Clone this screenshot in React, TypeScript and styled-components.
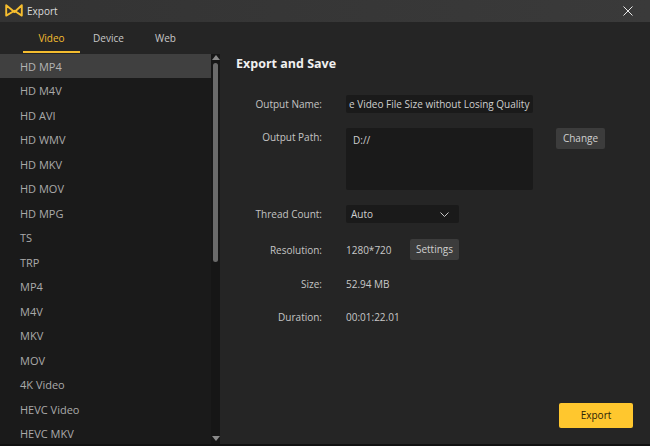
import React from 'react'
import styled, { createGlobalStyle } from 'styled-components'

const formats = [
  'HD MP4', 'HD M4V', 'HD AVI', 'HD WMV', 'HD MKV', 'HD MOV', 'HD MPG', 'TS', 'TRP',
  'MP4', 'M4V', 'MKV', 'MOV', '4K Video', 'HEVC Video', 'HEVC MKV',
]

const App = () => {
  return (
    <Window>
      <GlobalStyle />
      <TitleBar>
        <Logo viewBox="0 0 18 13">
          <path d="M1.2 1.2 L9.5 8 L16.8 1.2 V11.6 L9.5 6.8 L1.2 11.6 Z" fill="none" stroke="#f5bd2f" strokeWidth="1.9" strokeLinejoin="round" />
        </Logo>
        <WindowTitle>Export</WindowTitle>
        <CloseIcon viewBox="0 0 10 10">
          <path d="M0.5 0.5 L9.5 9.5 M9.5 0.5 L0.5 9.5" stroke="#e8e8e8" strokeWidth="1" fill="none" />
        </CloseIcon>
      </TitleBar>
      <Body>
        <Sidebar>
          <Tabs>
            <Tab $active>Video</Tab>
            <Tab>Device</Tab>
            <Tab>Web</Tab>
          </Tabs>
          <ListArea>
            <List>
              {formats.map((name, i) => (
                <ListItem key={name} $selected={i === 0}>{name}</ListItem>
              ))}
            </List>
            <ScrollBar>
              <Arrow viewBox="0 0 8 5"><path d="M4 0 L8 5 H0 Z" fill="#8a8a8a" /></Arrow>
              <Thumb />
              <Arrow viewBox="0 0 8 5"><path d="M0 0 H8 L4 5 Z" fill="#8a8a8a" /></Arrow>
            </ScrollBar>
          </ListArea>
        </Sidebar>
        <Panel>
          <Heading>Export and Save</Heading>
          <Form>
            <Row $height={18}>
              <Label>Output Name:</Label>
              <NameField>e Video File Size without Losing Quality</NameField>
            </Row>
            <Row $height={62} $alignTop>
              <Label>Output Path:</Label>
              <PathField>D://</PathField>
              <GreyButton $left={23}>Change</GreyButton>
            </Row>
            <Row $height={18}>
              <Label>Thread Count:</Label>
              <Select>
                Auto
                <Chevron viewBox="0 0 9 5">
                  <path d="M0.5 0.5 L4.5 4.5 L8.5 0.5" stroke="#c8c8c8" strokeWidth="1" fill="none" />
                </Chevron>
              </Select>
            </Row>
            <ResolutionRow $height={21}>
              <Label>Resolution:</Label>
              <Value $width={64}>1280*720</Value>
              <GreyButton>Settings</GreyButton>
            </ResolutionRow>
            <Row $height={18}>
              <Label>Size:</Label>
              <Value>52.94 MB</Value>
            </Row>
            <Row $height={18}>
              <Label>Duration:</Label>
              <Value>00:01:22.01</Value>
            </Row>
          </Form>
          <Footer>
            <ExportButton>Export</ExportButton>
          </Footer>
        </Panel>
      </Body>
    </Window>
  )
}

export default App

const GlobalStyle = createGlobalStyle`
  html, body {
    margin: 0;
    padding: 0;
    background: #111;
  }
  * {
    box-sizing: border-box;
  }
`
const Window = styled.div`
  width: 650px;
  height: 446px;
  display: flex;
  flex-direction: column;
  overflow: hidden;
  background: #111;
  font-family: "Open Sans", "Noto Sans", sans-serif;
  font-size: 10px;
  color: #c8c8c8;
`
const TitleBar = styled.div`
  height: 22px;
  flex: none;
  display: flex;
  align-items: center;
  padding: 0 17px 1px 5px;
  background: linear-gradient(90deg, #333 0%, #3a3a3a 100%);
`
const Logo = styled.svg`
  width: 18px;
  height: 13px;
`
const WindowTitle = styled.span`
  margin-left: 4px;
  color: #dcdcdc;
  flex: 1;
`
const CloseIcon = styled.svg`
  width: 10px;
  height: 10px;
`
const Body = styled.div`
  flex: none;
  height: 422px;
  display: flex;
`
const Sidebar = styled.div`
  width: 220px;
  flex: none;
  display: flex;
  flex-direction: column;
  background: #252525;
`
const Tabs = styled.div`
  height: 32px;
  flex: none;
  display: flex;
  padding-left: 23px;
`
const Tab = styled.div<{ $active?: boolean }>`
  width: 57px;
  height: 31px;
  line-height: 32px;
  text-align: center;
  color: ${p => (p.$active ? '#f5bd2f' : '#c8c8c8')};
  border-bottom: 2px solid ${p => (p.$active ? '#f5bd2f' : 'transparent')};
`
const ListArea = styled.div`
  flex: 1;
  min-height: 0;
  display: flex;
  background: #1a1a1a;
  overflow: hidden;
`
const List = styled.div`
  flex: 1;
  min-width: 0;
`
const ListItem = styled.div<{ $selected?: boolean }>`
  height: 24.47px;
  line-height: 25px;
  padding-left: 20px;
  font-size: 11px;
  color: ${p => (p.$selected ? '#b4b4b4' : '#aaa')};
  background: ${p => (p.$selected ? '#404040' : 'transparent')};
`
const ScrollBar = styled.div`
  width: 9px;
  flex: none;
  display: flex;
  flex-direction: column;
  align-items: center;
  padding: 1px 0 3px;
  background: #161616;
`
const Arrow = styled.svg`
  width: 8px;
  height: 5px;
  flex: none;
`
const Thumb = styled.div`
  width: 5px;
  height: 199px;
  margin: 3px 0 auto;
  border-radius: 3px;
  background: #6a6a6a;
`
const Panel = styled.div`
  flex: 1;
  display: flex;
  flex-direction: column;
  padding: 0 17px 16px 16px;
  background: #252525;
`
const Heading = styled.h2`
  margin: 32px 0 0;
  height: 20px;
  line-height: 20px;
  font-size: 12.5px;
  font-weight: 700;
  color: #f0f0f0;
`
const Form = styled.div`
  display: flex;
  flex-direction: column;
  gap: 15px;
  margin-top: 21px;
`
const Row = styled.div<{ $height: number; $alignTop?: boolean }>`
  height: ${p => p.$height}px;
  display: flex;
  align-items: ${p => (p.$alignTop ? 'flex-start' : 'center')};
`
const ResolutionRow = styled(Row)`
  margin-top: 1px;
`
const Label = styled.div`
  width: 86px;
  margin-right: 24px;
  flex: none;
  line-height: 18px;
  text-align: right;
  color: #c4c4c4;
`
const NameField = styled.div`
  width: 187px;
  height: 18px;
  padding-left: 3px;
  line-height: 18px;
  white-space: nowrap;
  overflow: hidden;
  border-radius: 2px;
  background: #1a1a1a;
  color: #cfcfcf;
`
const PathField = styled.div`
  width: 187px;
  height: 62px;
  padding: 3px 7px;
  line-height: 18px;
  border-radius: 2px;
  background: #1a1a1a;
  color: #cfcfcf;
`
const GreyButton = styled.div<{ $left?: number }>`
  width: 49px;
  height: 21px;
  margin-left: ${p => p.$left ?? 0}px;
  line-height: 21px;
  text-align: center;
  border-radius: 2px;
  background: #3c3c3c;
  color: #d0d0d0;
`
const Select = styled.div`
  width: 113px;
  height: 18px;
  padding: 0 10px 0 5px;
  display: flex;
  align-items: center;
  justify-content: space-between;
  border-radius: 2px;
  background: #1a1a1a;
  color: #cfcfcf;
`
const Chevron = styled.svg`
  width: 9px;
  height: 5px;
`
const Value = styled.div<{ $width?: number }>`
  width: ${p => (p.$width ? `${p.$width}px` : 'auto')};
  line-height: 18px;
  color: #c8c8c8;
`
const Footer = styled.div`
  margin-top: auto;
  display: flex;
  justify-content: flex-end;
`
const ExportButton = styled.div`
  width: 74px;
  height: 25px;
  line-height: 24px;
  text-align: center;
  border-radius: 2px;
  background: #ffc72e;
  color: #2a2208;
`
